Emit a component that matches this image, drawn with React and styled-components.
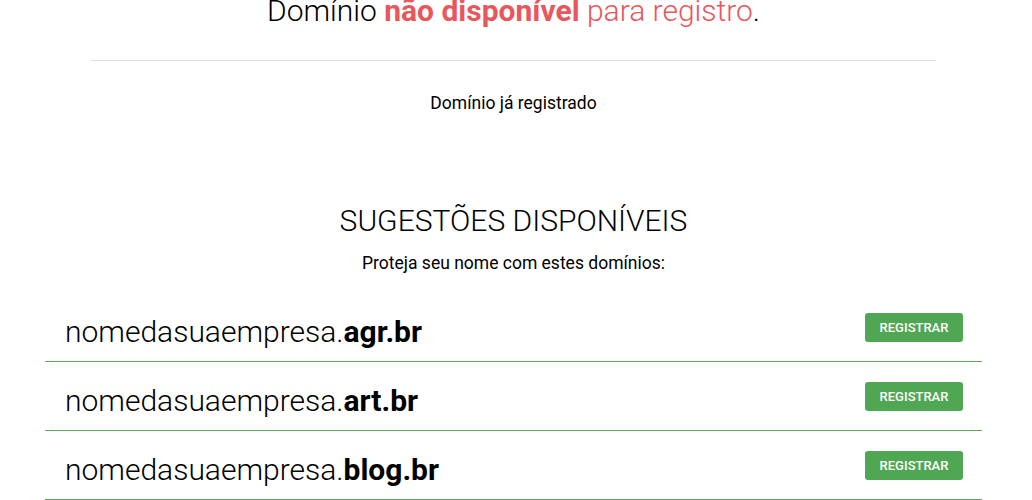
import styled, { createGlobalStyle } from "styled-components";

const GlobalStyle = createGlobalStyle`
  body {
    margin: 0;
    background: #ffffff;
    font-family: Roboto, "Liberation Sans", sans-serif;
    color: #000000;
  }
`;

const Page = styled.div`
  width: 937px;
  margin-left: 45px;
  overflow: hidden;
`;

const Title = styled.h1`
  margin: -4px 0 0 0;
  font-size: 30px;
  line-height: 30px;
  font-weight: 300;
  text-align: center;
  color: #000;
`;

const Red = styled.span`
  color: #e8575c;
  font-weight: ${(p) => (p.$bold ? 700 : 300)};
`;

const Rule = styled.hr`
  margin: 34px 46px 0 46px;
  border: none;
  border-top: 1px solid #dddddd;
  height: 0;
`;

const Status = styled.p`
  margin: 30px 0 0 0;
  font-size: 17.5px;
  line-height: 24px;
  text-align: center;
  font-weight: 400;
`;

const Heading = styled.h2`
  margin: 88px 0 0 0;
  font-size: 30px;
  line-height: 36px;
  font-weight: 300;
  text-align: center;
`;

const Sub = styled.p`
  margin: 12px 0 0 0;
  font-size: 17.5px;
  line-height: 24px;
  text-align: center;
`;

const List = styled.div`
  margin-top: 18px;
  display: flex;
  flex-direction: column;
`;

const Row = styled.div`
  height: 68px;
  display: flex;
  align-items: center;
  justify-content: space-between;
  padding: 0 19px 0 20px;
  border-bottom: 1px solid #5aa95e;
`;

const Domain = styled.div`
  font-size: 30px;
  font-weight: 300;
  line-height: 36px;
  margin-top: 9px;

  b {
    font-weight: 700;
  }
`;

const Button = styled.button`
  width: 98px;
  height: 29px;
  margin-top: 1px;
  border: none;
  border-radius: 3px;
  background: #4fa754;
  color: #ffffff;
  font-family: Roboto, "Liberation Sans", sans-serif;
  font-size: 13px;
  font-weight: 500;
  text-transform: uppercase;
  cursor: pointer;
`;

const suggestions = ["agr.br", "art.br", "blog.br"];

export default function App() {
  return (
    <>
      <GlobalStyle />
      <Page>
        <Title>
          Domínio <Red $bold>não disponível</Red> <Red>para registro</Red>.
        </Title>
        <Rule />
        <Status>Domínio já registrado</Status>
        <Heading>SUGESTÕES DISPONÍVEIS</Heading>
        <Sub>Proteja seu nome com estes domínios:</Sub>
        <List>
          {suggestions.map((tld) => (
            <Row key={tld}>
              <Domain>
                nomedasuaempresa.<b>{tld}</b>
              </Domain>
              <Button>Registrar</Button>
            </Row>
          ))}
        </List>
      </Page>
    </>
  );
}
